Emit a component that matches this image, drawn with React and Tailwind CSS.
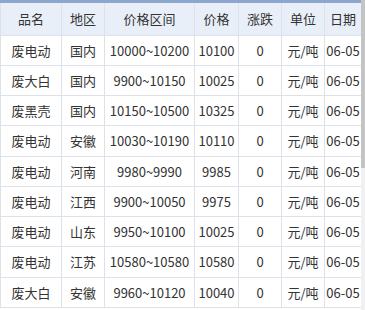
const rows = [
  ["废电动", "国内", "10000~10200", "10100"],
  ["废大白", "国内", "9900~10150", "10025"],
  ["废黑壳", "国内", "10150~10500", "10325"],
  ["废电动", "安徽", "10030~10190", "10110"],
  ["废电动", "河南", "9980~9990", "9985"],
  ["废电动", "江西", "9900~10050", "9975"],
  ["废电动", "山东", "9950~10100", "10025"],
  ["废电动", "江苏", "10580~10580", "10580"],
  ["废大白", "安徽", "9960~10120", "10040"],
];

const heads = ["品名", "地区", "价格区间", "价格", "涨跌", "单位", "日期"];
const widths = [61, 43, 90, 44, 43, 43, 37];

export default function App() {
  return (
    <div
      className="flex w-[365px] h-[310px] overflow-hidden bg-white text-[13px] text-[#333]"
      style={{ fontFamily: '"Noto Sans CJK SC", "Noto Sans", sans-serif' }}
    >
      <div className="w-[361px] h-full overflow-hidden">
        <div className="h-[3px] bg-[#8da6cf]" />
        <table className="table-fixed border-collapse w-[362px]">
          <colgroup>
            {widths.map((w, i) => (
              <col key={i} style={{ width: w }} />
            ))}
          </colgroup>
          <thead>
            <tr className="h-[32px] bg-[#e9eff8]">
              {heads.map((h) => (
                <th
                  key={h}
                  className="font-normal text-center p-0 border-x border-b border-[#dde1ea] leading-none"
                >
                  {h}
                </th>
              ))}
            </tr>
          </thead>
          <tbody>
            {rows.map((r, i) => (
              <tr key={i} className="h-[30.25px]">
                {[...r, "0", "元/吨", "06-05"].map((c, j) => (
                  <td
                    key={j}
                    className="text-center p-0 border border-[#dde1ea] leading-none whitespace-nowrap"
                  >
                    {c}
                  </td>
                ))}
              </tr>
            ))}
          </tbody>
        </table>
      </div>
      <div className="w-[4px] h-full flex flex-col bg-[#f1f1f1]">
        <div className="h-[168px] bg-[#c4c4c4]" />
      </div>
    </div>
  );
}
